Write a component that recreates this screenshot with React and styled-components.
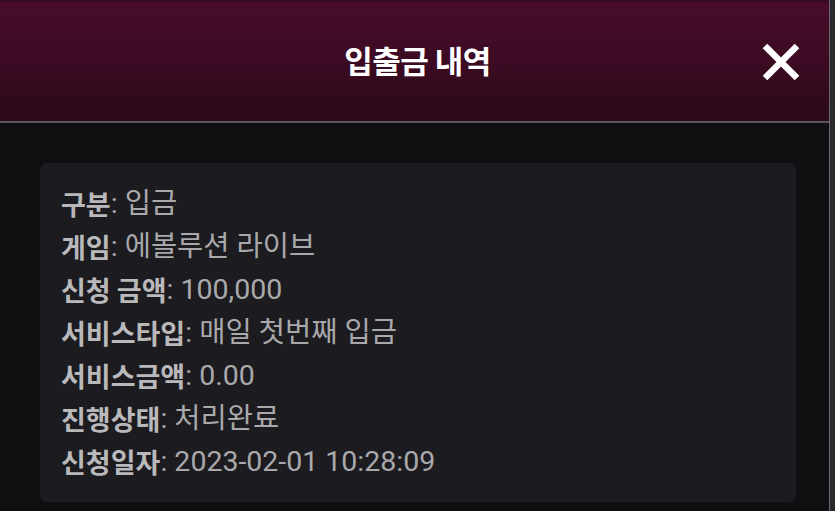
import React from "react";
import styled, { createGlobalStyle } from "styled-components";

const Global = createGlobalStyle`
  html, body { margin: 0; padding: 0; background: #0f0f11; }
  body { font-family: "Noto Sans CJK KR", "Roboto", sans-serif; overflow: hidden; }
`;

const Page = styled.div`
  width: 835px;
  height: 511px;
  display: flex;
  background: #0f0f11;
  overflow: hidden;
`;

const Main = styled.div`
  flex: 1;
  display: flex;
  flex-direction: column;
`;

const Scrollbar = styled.div`
  width: 5px;
  border-left: 1px solid #6a6a6e;
  background: #2a2a2e;
`;

const Header = styled.header`
  height: 121px;
  flex-shrink: 0;
  display: flex;
  align-items: center;
  justify-content: center;
  position: relative;
  background: linear-gradient(180deg, #2a0c1c 0px, #480c2a 3px, #3c0b23 60px, #2a0a18 121px);
  border-bottom: 2px solid #5a555a;
`;

const Title = styled.h1`
  margin: 0;
  margin-top: -2px;
  margin-left: 6px;
  font-family: "Noto Sans CJK KR", sans-serif;
  font-weight: 700;
  font-size: 31px;
  line-height: 40px;
  color: #ffffff;
  letter-spacing: -0.5px;
`;

const Close = styled.button`
  position: absolute;
  right: 29px;
  top: 43px;
  width: 38px;
  height: 38px;
  padding: 0;
  border: none;
  background: transparent;
  display: flex;
  align-items: center;
  justify-content: center;
`;

const Body = styled.div`
  flex: 1;
  padding: 40px 33px 0 40px;
`;

const Card = styled.div`
  background: #1c1b20;
  border-radius: 7px;
  padding: 19px 21px 19px;
`;

const Row = styled.div`
  height: 43px;
  display: flex;
  align-items: center;
  color: #a9a9ab;
  white-space: nowrap;
`;

const Label = styled.span`
  font-family: "Noto Sans CJK KR", sans-serif;
  font-weight: 700;
  font-size: 27px;
  line-height: 43px;
  color: #b9b9bb;
`;

const Value = styled.span`
  font-family: "Roboto", "Noto Sans CJK KR", sans-serif;
  font-weight: 400;
  font-size: 28.5px;
  line-height: 43px;
  white-space: pre;
`;

const rows = [
  ["구분", "입금"],
  ["게임", "에볼루션 라이브"],
  ["신청 금액", "100,000"],
  ["서비스타입", "매일 첫번째 입금"],
  ["서비스금액", "0.00"],
  ["진행상태", "처리완료"],
  ["신청일자", "2023-02-01 10:28:09"],
];

export default function App() {
  return (
    <>
      <Global />
      <Page>
        <Main>
          <Header>
            <Title>입출금 내역</Title>
            <Close aria-label="close">
              <svg width="38" height="38" viewBox="0 0 38 38">
                <path d="M3 3 L35 35 M35 3 L3 35" stroke="#fff" strokeWidth="6.5" strokeLinecap="butt" />
              </svg>
            </Close>
          </Header>
          <Body>
            <Card>
              {rows.map(([l, v]) => (
                <Row key={l}>
                  <Label>{l}</Label>
                  <Value>: {v}</Value>
                </Row>
              ))}
            </Card>
          </Body>
        </Main>
        <Scrollbar />
      </Page>
    </>
  );
}
